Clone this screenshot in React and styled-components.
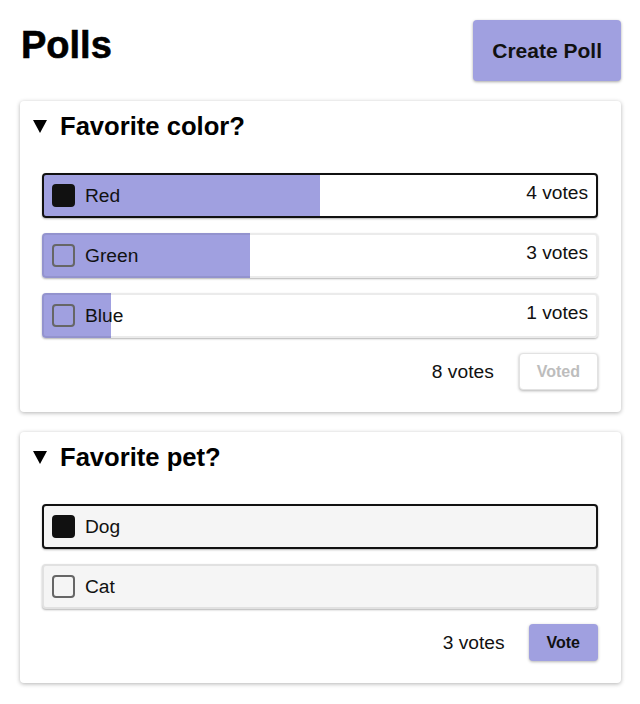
import React from 'react'
import styled, { createGlobalStyle } from 'styled-components'

const GlobalStyle = createGlobalStyle`
    body {
        margin: 0;
        background: #ffffff;
        font-family: "Liberation Sans", Arial, sans-serif;
        color: #111;
    }
`

const Page = styled.div`
    padding: 20px 19px 20px 20px;
`

const Header = styled.div`
    display: flex;
    justify-content: space-between;
    align-items: flex-start;
`

const Title = styled.h1`
    margin: 4px 0 0 1px;
    font-size: 38px;
    font-weight: 700;
    color: #000;
    -webkit-text-stroke: 0.6px #000;
`

const CreateButton = styled.button`
    height: 61px;
    padding: 0 19px;
    background-color: #a0a0e0;
    border: none;
    border-radius: 4px;
    box-shadow: 0 1px 3px rgba(0, 0, 0, 0.35);
    font-family: inherit;
    font-weight: 700;
    font-size: 21px;
    color: #111;
`

const Card = styled.section`
    margin-top: 20px;
    padding: 11px 23px 22px 13px;
    background: #fff;
    border-radius: 4px;
    box-shadow: 0 1px 4px rgba(0, 0, 0, 0.3);
`

const Summary = styled.div`
    display: flex;
    align-items: center;
    gap: 13px;
    font-size: 25.6px;
    font-weight: 700;
    color: #000;
`

const Triangle = styled.span`
    width: 0;
    height: 0;
    border-left: 7px solid transparent;
    border-right: 7px solid transparent;
    border-top: 13px solid #000;
`

const Options = styled.div`
    display: flex;
    flex-direction: column;
    gap: 15px;
    margin: 32px 0 0 9px;
`

const Option = styled.div`
    display: flex;
    align-items: center;
    height: 45px;
    box-sizing: border-box;
    padding: 0 8px;
    border-radius: 4px;
    border: 2px solid ${p => (p.$selected ? '#111' : 'rgba(0, 0, 0, 0.08)')};
    box-shadow: 0 1px 2px rgba(0, 0, 0, 0.3);
    font-size: 19.2px;
`

const Check = styled.span`
    width: 23px;
    height: 23px;
    box-sizing: border-box;
    border-radius: 4px;
    border: 2px solid ${p => (p.$checked ? '#111' : '#666')};
    background: ${p => (p.$checked ? '#111' : 'transparent')};
    flex-shrink: 0;
`

const Label = styled.span`
    margin-left: 10px;
    flex: 1;
`

const Count = styled.span`
    transform: translateY(-3px);
`

const Footer = styled.div`
    display: flex;
    justify-content: flex-end;
    align-items: center;
    gap: ${p => (p.$voted ? '25px' : '24px')};
    margin-top: 15px;
    font-size: 19.2px;
`

const VoteButton = styled.button`
    height: 37px;
    padding: 0 ${p => (p.disabled ? '17px' : '18px')};
    border-radius: 4px;
    font-family: inherit;
    font-weight: 700;
    font-size: 16px;
    box-shadow: 0 1px 3px rgba(0, 0, 0, 0.3);
    border: ${p => (p.disabled ? '1px solid #e2e2e2' : 'none')};
    background: ${p => (p.disabled ? '#fff' : '#a0a0e0')};
    color: ${p => (p.disabled ? '#bdbdbd' : '#111')};
`

const polls = [
    {
        question: 'Favorite color?',
        voted: true,
        total: 8,
        options: [
            { label: 'Red', votes: 4, selected: true },
            { label: 'Green', votes: 3 },
            { label: 'Blue', votes: 1 },
        ],
    },
    {
        question: 'Favorite pet?',
        voted: false,
        total: 3,
        options: [
            { label: 'Dog', selected: true },
            { label: 'Cat' },
        ],
    },
]

function Poll({ poll }) {
    return (
        <Card>
            <Summary>
                <Triangle />
                {poll.question}
            </Summary>
            <Options>
                {poll.options.map(opt => {
                    const pct = poll.voted ? (opt.votes / poll.total) * 100 : 0
                    const bg = poll.voted
                        ? `linear-gradient(to right, #a0a0e0 ${pct}%, #ffffff ${pct}%) border-box`
                        : '#f5f5f5'
                    return (
                        <Option key={opt.label} $selected={opt.selected} style={{ background: bg }}>
                            <Check $checked={opt.selected} />
                            <Label>{opt.label}</Label>
                            {poll.voted && <Count>{opt.votes} votes</Count>}
                        </Option>
                    )
                })}
            </Options>
            <Footer $voted={poll.voted}>
                <span>{poll.total} votes</span>
                <VoteButton disabled={poll.voted}>{poll.voted ? 'Voted' : 'Vote'}</VoteButton>
            </Footer>
        </Card>
    )
}

export default function App() {
    return (
        <>
            <GlobalStyle />
            <Page>
                <Header>
                    <Title>Polls</Title>
                    <CreateButton>Create Poll</CreateButton>
                </Header>
                {polls.map(p => (
                    <Poll key={p.question} poll={p} />
                ))}
            </Page>
        </>
    )
}
